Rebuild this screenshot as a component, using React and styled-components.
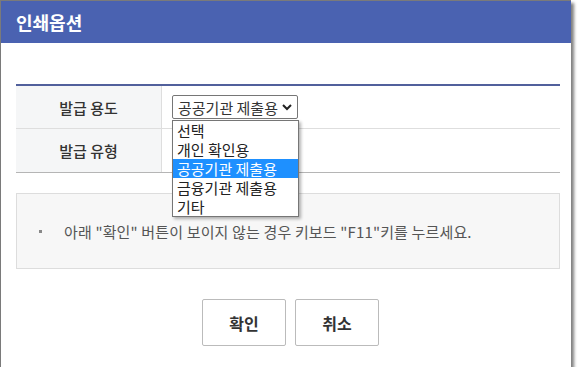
import React from "react";
import styled, { createGlobalStyle } from "styled-components";

const Global = createGlobalStyle`
  html, body { margin: 0; padding: 0; background: #fff; }
  body { font-family: "Noto Sans CJK KR", "Noto Sans", sans-serif; color: #333; }
  * { box-sizing: border-box; }
`;

const Window = styled.div`
  width: 571px;
  height: 367px;
  border-left: 1px solid #7a7a7a;
  border-top: 1px solid #7a7a7a;
  background: #fff;
  box-shadow: 3px 3px 3px rgba(0, 0, 0, 0.5);
  display: flex;
  flex-direction: column;
`;

const Header = styled.div`
  height: 42px;
  background: #4a62b1;
  display: flex;
  align-items: center;
  padding-left: 15px;
`;

const Title = styled.h1`
  margin: 0;
  font-size: 18px;
  font-weight: 700;
  color: #fff;
  line-height: 1;
`;

const Body = styled.div`
  flex: 1;
  padding: 41px 11px 0 15px;
  display: flex;
  flex-direction: column;
`;

const Table = styled.div`
  border-top: 2px solid #51609c;
  border-bottom: 1px solid #b5b5b5;
`;

const Row = styled.div`
  display: grid;
  grid-template-columns: 146px 1fr;
  height: ${(p) => p.$h}px;
  border-bottom: ${(p) => (p.$last ? "none" : "1px solid #dedede")};
`;

const Label = styled.div`
  background: #f5f6f7;
  border-right: 1px solid #dedede;
  display: flex;
  align-items: center;
  justify-content: center;
  font-size: 15px;
  color: #333;
  font-weight: 500;
`;

const Cell = styled.div`
  position: relative;
  padding: 9px 0 0 10px;
`;

const SelectBox = styled.div`
  width: 126px;
  height: 24px;
  border: 1px solid #767676;
  border-radius: 2px;
  display: flex;
  align-items: center;
  justify-content: space-between;
  padding: 0 5px 0 5px;
  font-size: 15px;
  color: #333;
  line-height: 1;
`;

const List = styled.ul`
  position: absolute;
  left: 10px;
  top: 34px;
  width: 127px;
  margin: 0;
  padding: 0;
  list-style: none;
  background: #fff;
  border: 1px solid #767676;
  box-shadow: 2px 2px 3px rgba(0, 0, 0, 0.3);
  z-index: 5;
`;

const Item = styled.li`
  height: 19px;
  line-height: 19px;
  padding-left: 4px;
  font-size: 15px;
  color: ${(p) => (p.$active ? "#fff" : "#222")};
  background: ${(p) => (p.$active ? "#1e90ff" : "transparent")};
  white-space: nowrap;
`;

const Notice = styled.div`
  margin-top: 20px;
  height: 76px;
  background: #f7f7f7;
  border: 1px solid #dddddd;
  display: flex;
  align-items: center;
  padding-left: 22px;
  gap: 22px;
  font-size: 15px;
  letter-spacing: 0.15px;
  color: #555;
`;

const Bullet = styled.span`
  width: 3px;
  height: 3px;
  background: #888;
  flex: none;
`;

const Buttons = styled.div`
  margin-top: 30px;
  display: flex;
  justify-content: center;
  gap: 9px;
  padding-left: 5px;
`;

const Button = styled.button`
  width: 84px;
  height: 47px;
  background: #fff;
  border: 1px solid #bbb;
  border-radius: 2px;
  font-family: inherit;
  font-size: 16px;
  font-weight: 700;
  color: #333;
  cursor: pointer;
`;

const options = ["선택", "개인 확인용", "공공기관 제출용", "금융기관 제출용", "기타"];

export default function App() {
  return (
    <>
      <Global />
      <Window>
        <Header>
          <Title>인쇄옵션</Title>
        </Header>
        <Body>
          <Table>
            <Row $h={43}>
              <Label>발급 용도</Label>
              <Cell>
                <SelectBox>
                  <span>공공기관 제출용</span>
                  <svg width="10" height="7" viewBox="0 0 10 7">
                    <polyline points="1,1 5,5 9,1" fill="none" stroke="#222" strokeWidth="2" />
                  </svg>
                </SelectBox>
                <List>
                  {options.map((o, i) => (
                    <Item key={o} $active={i === 2}>{o}</Item>
                  ))}
                </List>
              </Cell>
            </Row>
            <Row $h={43} $last>
              <Label>발급 유형</Label>
              <Cell />
            </Row>
          </Table>
          <Notice>
            <Bullet />
            <span>아래 "확인" 버튼이 보이지 않는 경우 키보드 "F11"키를 누르세요.</span>
          </Notice>
          <Buttons>
            <Button>확인</Button>
            <Button>취소</Button>
          </Buttons>
        </Body>
      </Window>
    </>
  );
}
